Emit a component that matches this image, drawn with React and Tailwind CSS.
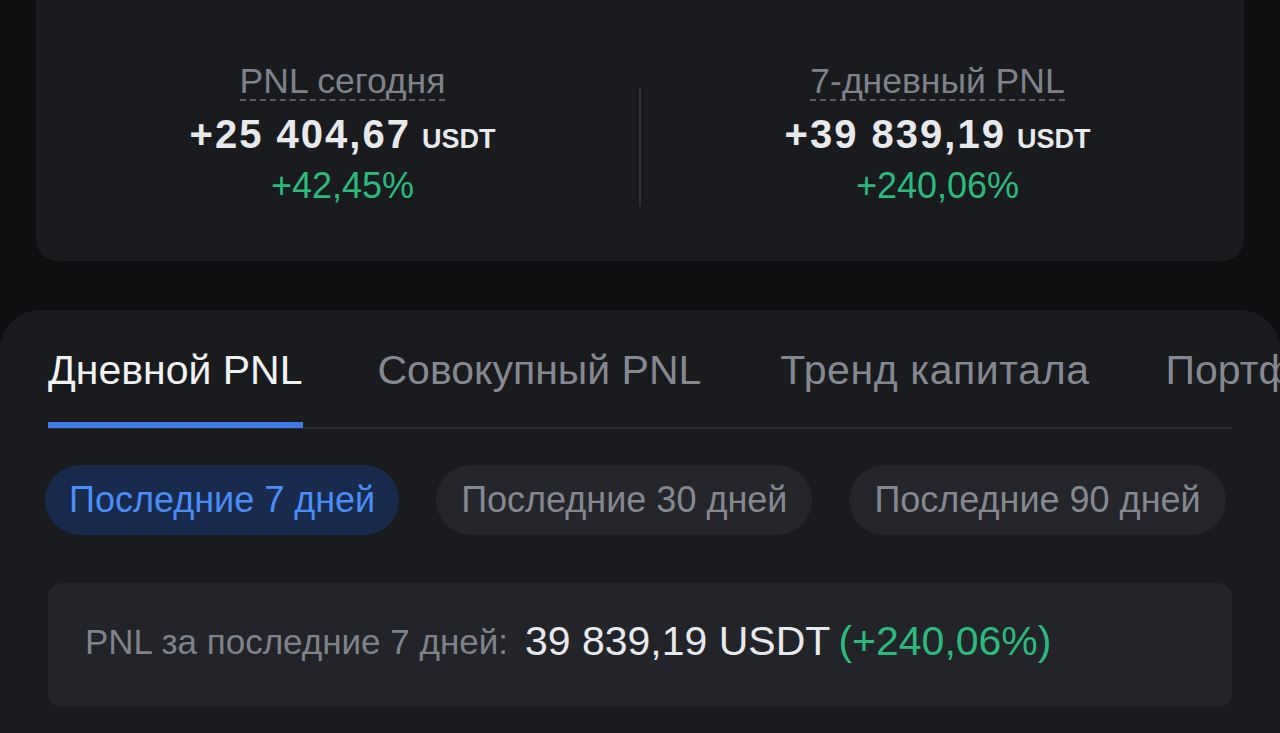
import React from "react";

const font = { fontFamily: '"Liberation Sans", Arial, sans-serif' };

function Stat({ label, value, pct }) {
  return (
    <div className="flex-1 flex flex-col items-center">
      <span className="inline-block text-[35.5px] leading-[36px] text-[#7f828b] border-b-2 border-dashed border-[#5b5e66]">
        {label}
      </span>
      <div className="mt-[11px] flex items-baseline leading-[44px] text-[#e8e9ec]">
        <span className="text-[40px] font-bold tracking-[2px]">{value}</span>
        <span className="ml-[11px] text-[27px] font-bold">USDT</span>
      </div>
      <div className="mt-[5px] text-[36px] leading-[40px] text-[#2bba7e]">{pct}</div>
    </div>
  );
}

export default function App() {
  return (
    <div className="w-full h-[733px] overflow-hidden bg-[#0e0f11]" style={font}>
      <div className="mx-[36px] h-[261px] rounded-b-[22px] bg-[#1a1b1f] px-[10px] pt-[63px] flex">
        <Stat label="PNL сегодня" value="+25 404,67" pct="+42,45%" />
        <div className="mt-[25px] h-[118px] w-[2px] bg-[#2e3035]" />
        <Stat label="7-дневный PNL" value="+39 839,19" pct="+240,06%" />
      </div>

      <div className="mt-[49px] h-[500px] rounded-t-[40px] bg-[#1a1b1f] overflow-hidden px-[48px] pt-[36px]">
        <div className="flex whitespace-nowrap text-[41px] leading-[48px]">
          <div className="flex flex-col">
            <span className="text-[#f1f2f4]">Дневной PNL</span>
            <div className="mt-[28px] h-[6px] bg-[#3f7be6]" />
          </div>
          <span className="ml-[75px] text-[#858891]">Совокупный PNL</span>
          <span className="ml-[79px] text-[#858891] tracking-[0.6px]">Тренд капитала</span>
          <span className="ml-[76px] text-[#858891]">Портфель</span>
        </div>
        <div className="mt-[-1px] h-[2px] bg-[#2b2d32]" />

        <div className="mt-[36px] ml-[-3px] flex gap-[37px] text-[36px] whitespace-nowrap">
          <div className="h-[70px] px-[24px] rounded-full bg-[#182b4c] text-[#4a8df6] flex items-center">
            Последние 7 дней
          </div>
          <div className="h-[70px] px-[25px] rounded-full bg-[#25262b] text-[#858891] flex items-center">
            Последние 30 дней
          </div>
          <div className="h-[70px] px-[25px] rounded-full bg-[#25262b] text-[#858891] flex items-center">
            Последние 90 дней
          </div>
        </div>

        <div className="mt-[48px] h-[124px] rounded-[14px] bg-[#232429] px-[37px] pb-[6px] flex items-center whitespace-nowrap">
          <span className="text-[35px] text-[#7f828b]">PNL за последние 7 дней:</span>
          <span className="ml-[17px] text-[41px] text-[#e8e9ec]">39 839,19 USDT</span>
          <span className="ml-[8px] text-[41px] text-[#2bba7e]">(+240,06%)</span>
        </div>
      </div>
    </div>
  );
}
